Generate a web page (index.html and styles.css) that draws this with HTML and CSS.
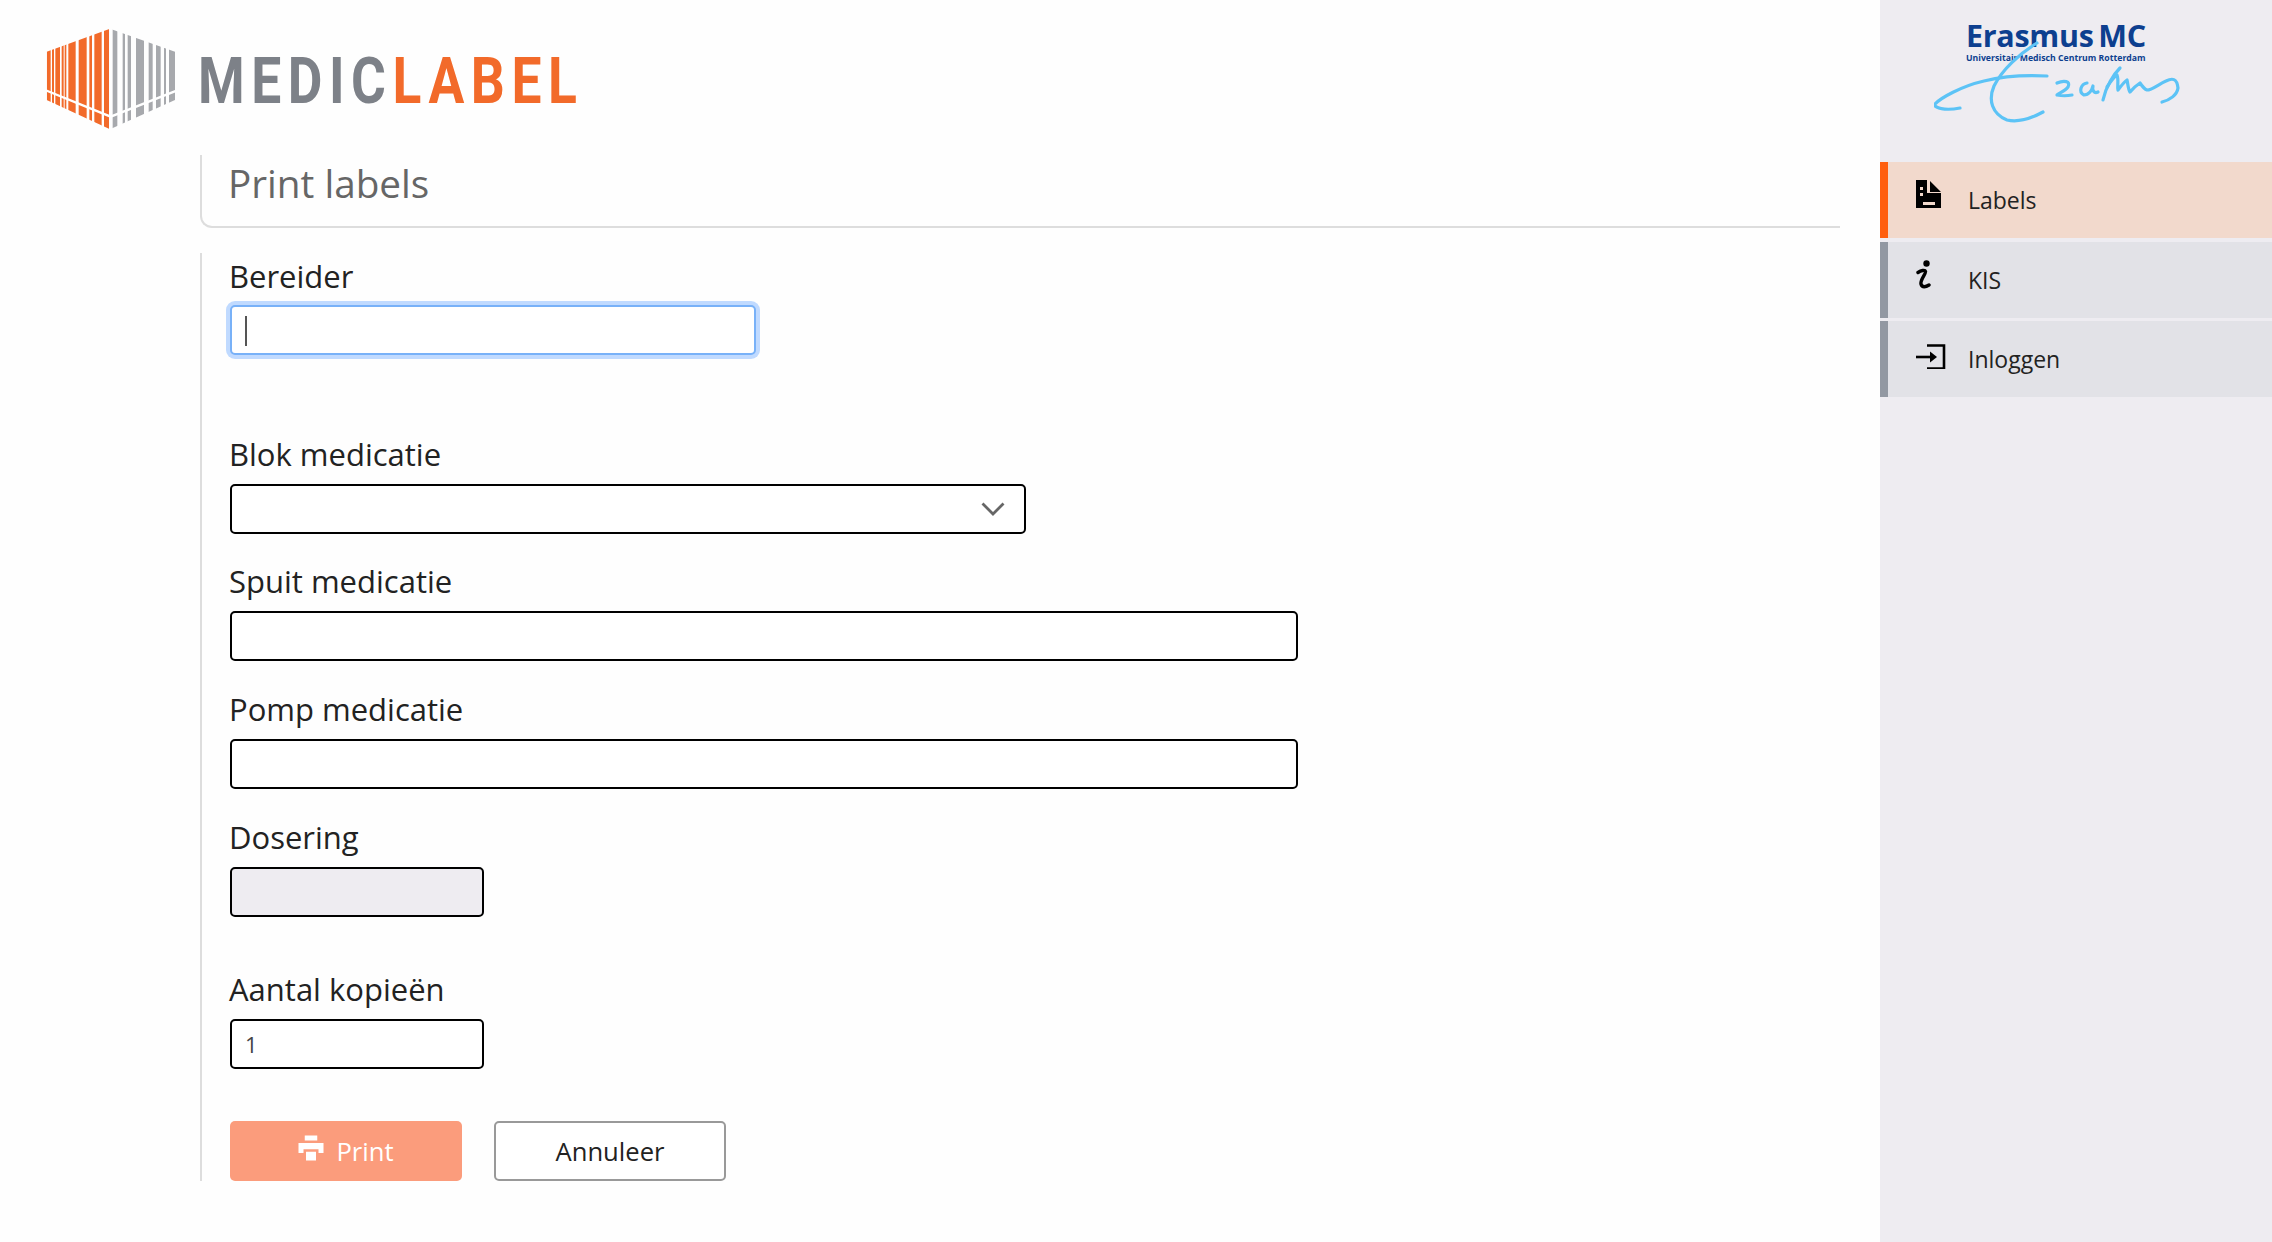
FILE: index.html
```html
<!DOCTYPE html>
<html lang="nl">

<head>
  <meta charset="UTF-8" />
  <title>Medic Label</title>
  <link rel="stylesheet" href="styles.css">
</head>

<body>
  <main class="main-content">
    <header class="brand">
      <svg class="brand-mark" viewBox="0 0 510 360" aria-hidden="true">
        <defs>
          <clipPath id="box">
            <polygon points="50,95 240,26 435,95 435,240 240,328 50,240" />
          </clipPath>
        </defs>
        <g clip-path="url(#box)">
          <g fill="#f26a2a">
            <rect x="50" y="0" width="12" height="360" />
            <rect x="66" y="0" width="6" height="360" />
            <rect x="76" y="0" width="14" height="360" />
            <rect x="95" y="0" width="6" height="360" />
            <rect x="104" y="0" width="5" height="360" />
            <rect x="115" y="0" width="22" height="360" />
            <rect x="146" y="0" width="24" height="360" />
            <rect x="178" y="0" width="8" height="360" />
            <rect x="193" y="0" width="22" height="360" />
            <rect x="222" y="0" width="15" height="360" />
          </g>
          <g fill="#a7a9ad">
            <rect x="248" y="0" width="14" height="360" />
            <rect x="278" y="0" width="7" height="360" />
            <rect x="293" y="0" width="10" height="360" />
            <rect x="318" y="0" width="24" height="360" />
            <rect x="356" y="0" width="12" height="360" />
            <rect x="378" y="0" width="14" height="360" />
            <rect x="402" y="0" width="6" height="360" />
            <rect x="417" y="0" width="18" height="360" />
          </g>
        </g>
        <polyline points="45,210 242,290 440,212" fill="none" stroke="#fff" stroke-width="7" />
      </svg>
      <div class="brand-name"><span class="brand-grey">MEDIC</span><span class="brand-orange">LABEL</span></div>
    </header>

    <div class="page-title">
      <h1>Print labels</h1>
    </div>

    <form class="label-form">
      <div class="field field-first">
        <label>Bereider</label>
        <div class="input-wrap">
          <input class="input input-focus" type="text">
          <span class="caret"></span>
        </div>
      </div>

      <div class="field field-block">
        <label>Blok medicatie</label>
        <div class="input-wrap select-wrap">
          <div class="input"></div>
          <svg class="chevron" viewBox="0 0 24 14" aria-hidden="true">
            <path d="M1.5 1.500 12 12 22.500 1.500" fill="none" stroke="#666" stroke-width="2.800" />
          </svg>
        </div>
      </div>

      <div class="field">
        <label>Spuit medicatie</label>
        <input class="input input-wide" type="text">
      </div>

      <div class="field">
        <label>Pomp medicatie</label>
        <input class="input input-wide" type="text">
      </div>

      <div class="field field-dose">
        <label>Dosering</label>
        <input class="input input-small input-disabled" type="text" disabled>
      </div>

      <div class="field field-copies">
        <label>Aantal kopieën</label>
        <input class="input input-small" type="text" value="1">
      </div>

      <div class="actions">
        <button class="btn btn-print" type="button">
          <svg class="print-icon" viewBox="0 0 24 24" aria-hidden="true">
            <path d="M7 2h10v4H7zM2 8h20v8h-4v-3H6v3H2zM8 15h8v7H8z" fill="#fff" />
          </svg>
          Print
        </button>
        <button class="btn btn-cancel" type="button">Annuleer</button>
      </div>
    </form>
  </main>

  <aside class="sidebar">
    <div class="org-logo">
      <div class="org-name">Erasmus MC</div>
      <div class="org-sub">Universitair Medisch Centrum Rotterdam</div>
      <svg class="signature" viewBox="0 0 250 85" aria-hidden="true">
        <g fill="none" stroke="#5cc3f6" stroke-width="3.200" stroke-linecap="round" stroke-linejoin="round">
          <path d="M26 68C16 70 4 70 0 65 6 58 28 46 50 41 70 36 95 35 113 36" />
          <path d="M103 3C85 14 68 30 60 46 54 60 58 74 73 80 85 83 98 78 109 72" />
          <path d="M123 43C130 40 137 41 134 47 131 51 125 53 123 55 128 56 133 56 138 55" />
          <path d="M153 43C147 44 144 52 150 55 155 55 158 50 159 46 158 50 160 54 164 52" />
          <path d="M186 28C180 34 172 46 169 60" />
          <path d="M173 47C177 41 180 37 183 35 185 40 183 46 184 50 187 46 190 42 193 40 194 44 194 49 196 52 199 48 203 45 206 43 208 46 210 49 213 50 218 50 225 44 232 41 238 38 243 38 244 48 243 55 236 60 228 62" />
        </g>
      </svg>
    </div>
    <nav class="side-nav">
      <a class="nav-item active" href="#">
        <svg class="nav-icon" viewBox="0 0 30 30" aria-hidden="true">
          <path fill-rule="evenodd" d="M0 0h11v13h14v15H0zM14 1l11 11H14zM4 7h3v3H4zM4 13h3v3H4zM7 22h12v3H7z" />
        </svg>
        <span>Labels</span>
      </a>
      <a class="nav-item" href="#">
        <svg class="nav-icon" viewBox="0 0 30 30" aria-hidden="true">
          <circle cx="10.500" cy="3.500" r="3.200" />
          <path d="M2 12.500C5 10.500 9 9.500 9.500 11.500 10 13.500 4 20 5 24 6 28 10 27 13 25" fill="none" stroke="#000" stroke-width="3.400" stroke-linecap="round" />
        </svg>
        <span>KIS</span>
      </a>
      <a class="nav-item" href="#">
        <svg class="nav-icon" viewBox="0 0 30 30" aria-hidden="true">
          <path d="M11 6.500h17v23H11" fill="none" stroke="#000" stroke-width="2.600" />
          <path d="M0 18h16" fill="none" stroke="#000" stroke-width="2.600" />
          <path d="M14 12.500 21 18l-7 5.500z" />
        </svg>
        <span>Inloggen</span>
      </a>
    </nav>
  </aside>
</body>

</html>
```

FILE: styles.css
```css
* {
  box-sizing: border-box;
}

body {
  background: #fefefe;
  color: #222;
  font-family: 'Open Sans', 'Liberation Sans', sans-serif;
  min-height: 100vh;
  margin: 0;
  display: flex;
}

.main-content {
  flex: 1;
  min-width: 0;
  padding: 0 40px 0 0;
}

/* logo */
.brand {
  height: 155px;
  display: flex;
  align-items: flex-start;
  padding: 20px 0 0 30px;
}

.brand-mark {
  width: 170px;
  height: 120px;
  flex: none;
}

.brand-name {
  margin: 23px 0 0 -2px;
  font-family: 'Roboto', 'Liberation Sans', sans-serif;
  font-size: 65px;
  line-height: 76px;
  font-weight: 700;
  letter-spacing: 8px;
  white-space: nowrap;
  transform: scaleX(0.82);
  transform-origin: left center;
}

.brand-grey {
  color: #7d8188;
}

.brand-orange {
  color: #f26a2a;
}

/* titel */
.page-title {
  margin: 0 0 25px 200px;
  height: 73px;
  border-left: 2px solid #ddd;
  border-bottom: 2px solid #ddd;
  border-bottom-left-radius: 12px;
  padding-left: 26px;
}

.page-title h1 {
  margin: 0;
  font-size: 38.7px;
  line-height: 56px;
  font-weight: 500;
  color: #666;
}

/* formulier */
.label-form {
  margin-left: 200px;
  height: 928px;
  border-left: 2px solid #ddd;
  padding-left: 28px;
}

.field {
  margin-bottom: 24px;
}

.field-first {
  margin-bottom: 75px;
}

.field-block {
  margin-bottom: 23px;
}

.field-dose {
  margin-bottom: 48px;
}

.field-copies {
  margin-bottom: 52px;
}

.field label {
  display: block;
  height: 48px;
  margin: 0 0 6px -1px;
  font-size: 31px;
  line-height: 48px;
  color: #222;
}

.field-first label {
  height: 46px;
  line-height: 46px;
  margin-bottom: 6px;
}

.input-wrap {
  position: relative;
  width: 526px;
}

.select-wrap {
  width: 796px;
}

.input {
  display: block;
  width: 100%;
  height: 50px;
  border: 2px solid #000;
  border-radius: 5px;
  background: #fff;
  padding: 0 13px;
  font-family: inherit;
  font-size: 22px;
  color: #444;
  outline: none;
}

.input-wide {
  width: 1068px;
}

.input-small {
  width: 254px;
}

.input-disabled {
  background: #eeecf1;
}

.input-focus {
  border-color: #78b1f8;
  box-shadow: 0 0 0 4px #c0daff;
}

.caret {
  position: absolute;
  left: 15px;
  top: 11px;
  width: 2px;
  height: 30px;
  background: #555;
}

.chevron {
  position: absolute;
  right: 21px;
  top: 18px;
  width: 24px;
  height: 14px;
}

.actions {
  display: flex;
  gap: 32px;
}

.btn {
  width: 232px;
  height: 60px;
  border-radius: 5px;
  font-family: inherit;
  font-size: 25.6px;
  display: flex;
  align-items: center;
  justify-content: center;
  gap: 10px;
}

.btn-print {
  background: #fb9c7c;
  border: none;
  color: #fff;
}

.btn-cancel {
  background: #fff;
  border: 2px solid #999;
  color: #222;
}

.print-icon {
  width: 30px;
  height: 30px;
  margin: -6px 0 0 -2px;
}

/* zijbalk */
.sidebar {
  width: 392px;
  flex: none;
  background: #eeecf1;
}

.org-logo {
  position: relative;
  height: 162px;
  padding: 18px 0 0 86px;
  color: #0d3f8f;
}

.org-name {
  font-size: 30.5px;
  line-height: 35px;
  font-weight: 700;
  letter-spacing: -0.3px;
  word-spacing: -3px;
  white-space: nowrap;
}

.org-sub {
  font-size: 8.7px;
  line-height: 10px;
  font-weight: 700;
  white-space: nowrap;
}

.signature {
  position: absolute;
  left: 54px;
  top: 40px;
  width: 250px;
  height: 85px;
}

.side-nav {
  display: flex;
  flex-direction: column;
}

.nav-item {
  height: 76px;
  margin-bottom: 3px;
  padding-left: 28px;
  border-left: 8px solid #9298a2;
  background: #e2e2e7;
  color: #222;
  font-size: 23px;
  text-decoration: none;
  display: flex;
  align-items: center;
}

.nav-item span {
  margin-top: -1px;
}

.nav-item.active {
  border-left-color: #ff5f0f;
  background: #f2d9cc;
  margin-bottom: 4px;
}

.nav-icon {
  width: 30px;
  height: 30px;
  margin-right: 22px;
  margin-top: -10px;
  flex: none;
}
```
